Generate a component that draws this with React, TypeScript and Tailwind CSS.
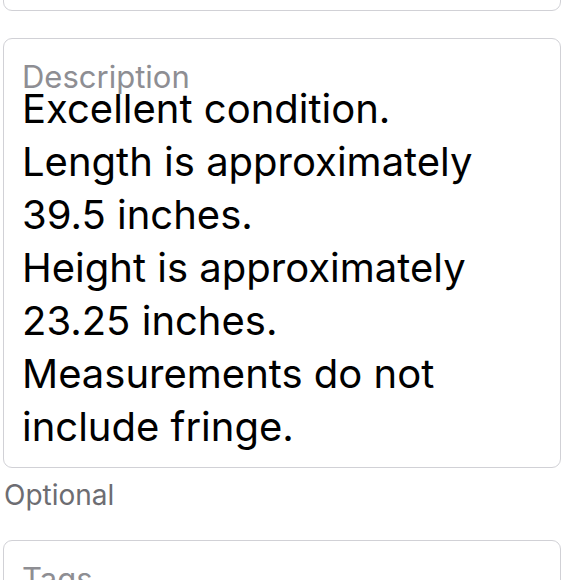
import React from "react";

export default function App() {
  return (
    <div className="w-[580px] h-[580px] overflow-hidden bg-white" style={{ fontFamily: 'Inter, "Liberation Sans", Arial, sans-serif' }}>
      <div className="ml-[3px] w-[558px] mt-[-40px] h-[51px] rounded-[9px] border border-[#d1d1d6]" />
      <div className="ml-[3px] w-[558px] mt-[27px] h-[430px] rounded-[9px] border border-[#d1d1d6] px-[18px] pt-[22px]">
        <div className="text-[31px] leading-[32px] text-[#8e8e93]">Description</div>
        <div className="text-[40px] leading-[53px] text-black mt-[-11px]">
          Excellent condition.<br />
          Length is approximately<br />
          39.5 inches.<br />
          Height is approximately<br />
          23.25 inches.<br />
          Measurements do not<br />
          include fringe.
        </div>
      </div>
      <div className="ml-[4px] mt-[7px] text-[28px] leading-[40px] text-[#6d6d72]">Optional</div>
      <div className="ml-[3px] w-[558px] mt-[25px] h-[80px] rounded-[9px] border border-[#d1d1d6] px-[18px] pt-[22px]">
        <div className="text-[31px] leading-[32px] text-[#8e8e93]">Tags</div>
      </div>
    </div>
  );
}
